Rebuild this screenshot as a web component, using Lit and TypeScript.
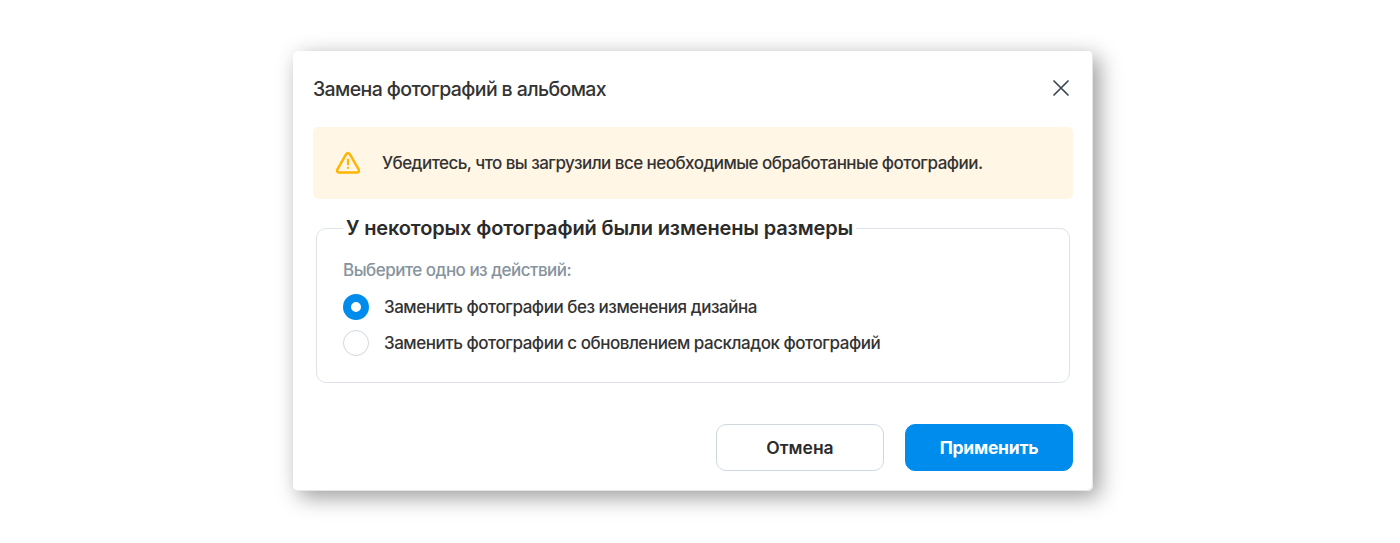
import { LitElement, html, css } from "lit";
import { customElement, state } from "lit/decorators.js";
import { classMap } from "lit/directives/class-map.js";

const OPTIONS = [
  "Заменить фотографии без изменения дизайна",
  "Заменить фотографии с обновлением раскладок фотографий",
];

@customElement("app-root")
export class AppRoot extends LitElement {
  @state() private selected = 0;

  static styles = css`
    :host {
      display: flex;
      justify-content: center;
      height: 543px;
      padding: 51px 14px 0 0;
      box-sizing: border-box;
      overflow: hidden;
      background: #fff;
      color: #333;
      font-family: Inter, "Liberation Sans", sans-serif;
      font-size: 17px;
      font-weight: 450;
    }
    * { box-sizing: border-box; }
    .dialog {
      width: 800px;
      height: 440px;
      padding: 0 20px;
      background: #fff;
      border-radius: 5px;
      box-shadow: inset -1px -1px 0 #e6e6e6, 6px 6px 22px rgba(0, 0, 0, 0.4);
      display: flex;
      flex-direction: column;
    }
    .header {
      height: 76px;
      display: flex;
      align-items: center;
      justify-content: space-between;
    }
    .title { margin: 0; font-size: 19.5px; font-weight: 450; letter-spacing: -0.61px; white-space: nowrap; }
    .close {
      width: 24px; height: 24px; padding: 0 0 2px; border: 0; background: none;
      display: flex; align-items: center; justify-content: center;
    }
    .alert {
      height: 72px;
      padding-left: 22px;
      display: flex;
      align-items: center;
      gap: 21px;
      background: #fff6e5;
      border-radius: 5px;
      letter-spacing: -0.54px;
      white-space: nowrap;
    }
    .message { padding-bottom: 1px; }
    .group {
      margin: 15px 3px 0;
      height: 169px;
      padding: 0 26px;
      min-width: 0;
      border: 1px solid #dde3e8;
      border-radius: 10px;
    }
    .legend { height: 28px; line-height: 28px; padding: 0 3px; color: #2b2b2b; font-size: 20px; font-weight: 600; letter-spacing: -0.14px; white-space: nowrap; }
    .hint { height: 37px; line-height: 22px; padding-top: 17px; color: #87939e; letter-spacing: -0.51px; }
    .options { display: flex; flex-direction: column; gap: 10px; padding-top: 15px; }
    .option { height: 26px; display: flex; align-items: center; gap: 15px; letter-spacing: -0.47px; white-space: nowrap; }
    .radio { width: 26px; height: 26px; border-radius: 50%; border: 1px solid #cfd6dc; background: #fff; }
    .radio.checked { border: 8px solid #008cec; }
    .actions { display: flex; justify-content: flex-end; gap: 21px; margin-top: 41px; }
    .btn {
      width: 168px; height: 47px; padding: 0; border-radius: 10px;
      border: 1px solid #d0d8de; background: #fff; color: #2b2b2b;
      font: 600 17.5px Inter, "Liberation Sans", sans-serif;
    }
    .btn.primary { border-color: #008cec; background: #008cec; color: #fff; font-weight: 700; letter-spacing: -0.25px; }
  `;

  render() {
    return html`
      <section class="dialog" role="dialog">
        <header class="header">
          <h1 class="title">Замена фотографий в альбомах</h1>
          <button class="close" aria-label="Закрыть">
            <svg width="16" height="16" viewBox="0 0 16 16" fill="none" stroke="#3c4853" stroke-width="1.7" stroke-linecap="round">
              <path d="M1 1L15 15M15 1L1 15" />
            </svg>
          </button>
        </header>
        <div class="alert">
          <svg width="26" height="24" viewBox="0 0 26 24" fill="none" stroke="#ffb400" stroke-width="2.4" stroke-linecap="round" stroke-linejoin="round">
            <path d="M11.2 3.2L2.4 18.4Q1.2 21.4 4 21.5H22Q24.8 21.4 23.6 18.4L14.8 3.2Q13 .8 11.2 3.2Z" />
            <path d="M13 8.7V13.3M13 16.8V16.9" stroke-width="2.2" />
          </svg>
          <span class="message">Убедитесь, что вы загрузили все необходимые обработанные фотографии.</span>
        </div>
        <fieldset class="group">
          <legend class="legend"><span>У некоторых фотографий были изменены размеры</span></legend>
          <div class="hint"><span>Выберите одно из действий:</span></div>
          <div class="options">
            ${OPTIONS.map(
              (label, i) => html`
                <div class="option" role="radio" aria-checked=${i === this.selected} @click=${() => (this.selected = i)}>
                  <span class=${classMap({ radio: true, checked: i === this.selected })}></span>
                  <span>${label}</span>
                </div>
              `
            )}
          </div>
        </fieldset>
        <footer class="actions">
          <button class="btn">Отмена</button>
          <button class="btn primary">Применить</button>
        </footer>
      </section>
    `;
  }
}
